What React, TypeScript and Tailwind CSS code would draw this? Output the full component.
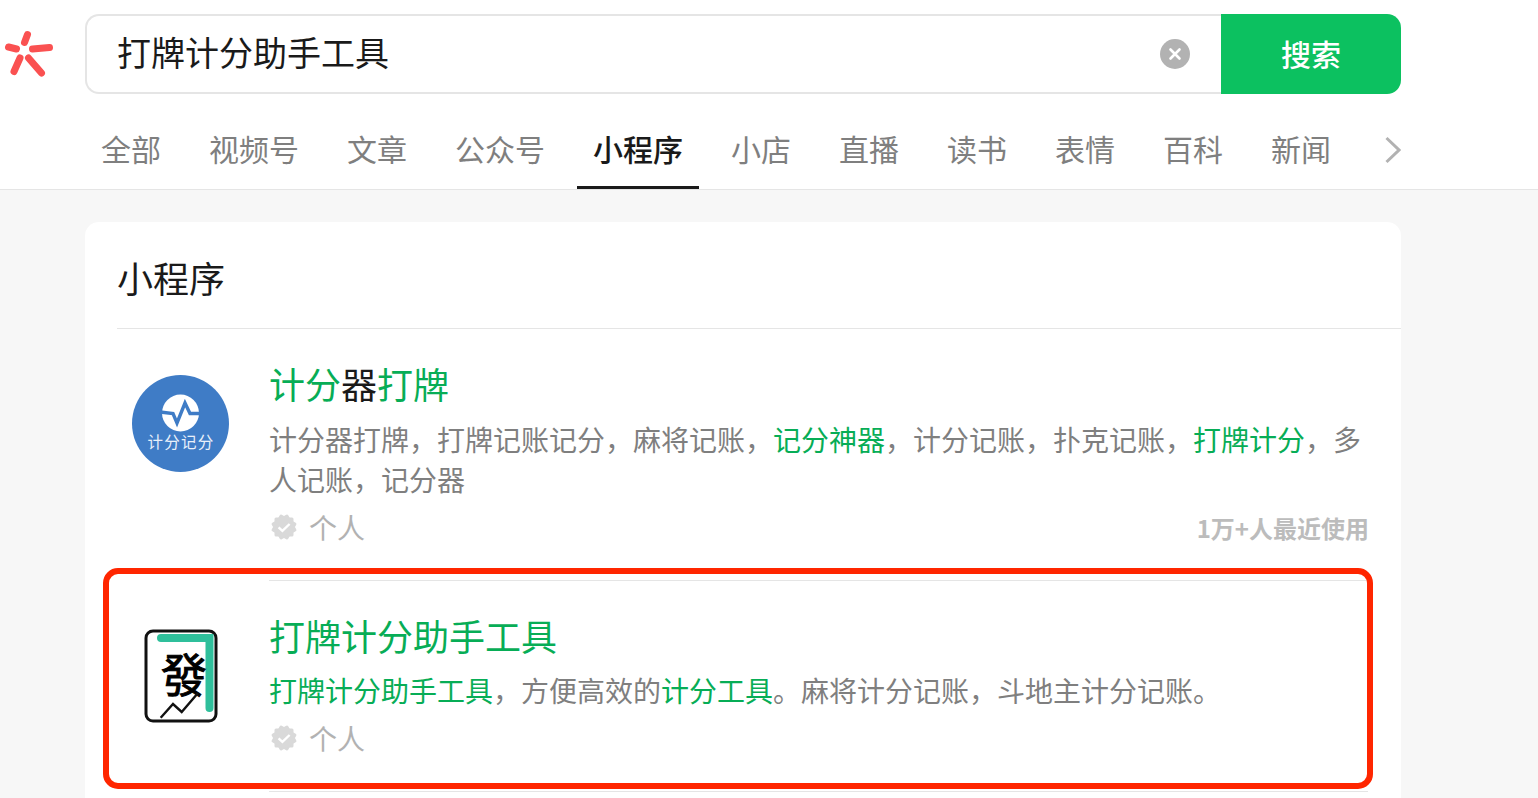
import React from "react";

const tabs = ["全部", "视频号", "文章", "公众号", "小程序", "小店", "直播", "读书", "表情", "百科", "新闻"];

function Logo() {
  return (
    <svg width="85" height="80" viewBox="0 14 85 80" className="shrink-0">
      <g stroke="#fa5151" strokeWidth="7" strokeLinecap="round" fill="none">
        <path d="M27.5 34.5 L24.5 42.5" />
        <path d="M32.5 49 L49.5 47.5" />
        <path d="M8.5 47 L16.5 49" />
        <path d="M20 58 L14 71.5" />
        <path d="M28.5 58 L41.5 73" />
      </g>
    </svg>
  );
}

function Badge() {
  return (
    <svg width="28" height="28" viewBox="0 0 28 28" className="shrink-0 ml-[1px]">
      <g fill="#d9d9d9">
        <rect x="4.5" y="4.5" width="19" height="19" rx="1.5" />
        <rect x="4.5" y="4.5" width="19" height="19" rx="1.5" transform="rotate(30 14 14)" />
        <rect x="4.5" y="4.5" width="19" height="19" rx="1.5" transform="rotate(60 14 14)" />
      </g>
      <path d="M8.6 14.4 L12.4 17.8 L19.6 11" stroke="#ffffff" strokeWidth="2.4" fill="none" />
    </svg>
  );
}

function Meta({ right }: { right?: string }) {
  return (
    <div className="flex items-center h-[40px]">
      <Badge />
      <span className="ml-[11px] text-[28px] leading-[40px] text-[#b2b2b2]">个人</span>
      {right && <span className="ml-auto mr-[-1px] mt-[2px] text-[24px] leading-[40px] text-[#bcbcbc] font-bold">{right}</span>}
    </div>
  );
}

const G = ({ children }: { children: React.ReactNode }) => <span className="text-[#07ad56]">{children}</span>;

function CircleIcon() {
  return (
    <svg width="97" height="97" viewBox="0 0 97 97">
      <circle cx="48.5" cy="48.5" r="48.5" fill="#3f7cc6" />
      <circle cx="48.5" cy="38" r="18.5" fill="#ffffff" />
      <path d="M28 37 L41 38.5 L45 48 L53 28 L58 38.5 H69" stroke="#3f7cc6" strokeWidth="3.4" fill="none" />
      <text x="49" y="73" textAnchor="middle" fontSize="15.5" letterSpacing="1.2" fill="#e8f0fa">计分记分</text>
    </svg>
  );
}

function TileIcon() {
  return (
    <svg width="74" height="94" viewBox="0 0 74 94">
      <rect x="2" y="2" width="70" height="90" rx="7" fill="#ffffff" stroke="#111111" strokeWidth="3" />
      <path d="M17 9 H65.5 V79" stroke="#2fbf9b" strokeWidth="8" strokeLinecap="round" fill="none" />
      <text
        x="40"
        y="63"
        textAnchor="middle"
        fontSize="46"
        fill="#000000"
        stroke="#000000"
        strokeWidth="1"
        style={{ fontFamily: '"Noto Sans CJK TC", sans-serif' }}
      >
        發
      </text>
      <path d="M16.7 88.7 L29 75 L37.7 83 L54 64" stroke="#111111" strokeWidth="2.4" fill="none" />
    </svg>
  );
}

export default function App() {
  return (
    <div
      className="relative w-[1538px] h-[798px] overflow-hidden bg-[#f7f7f7]"
      style={{ fontFamily: '"Noto Sans CJK SC", "Noto Sans", sans-serif' }}
    >
      <header className="h-[190px] bg-white border-b border-[#e5e5e5] pt-[14px]">
        <div className="flex w-[1401px] h-[80px]">
          <Logo />
          <div className="flex-1 flex items-center border-2 border-r-0 border-[#e5e5e5] rounded-l-[14px] pl-[30px] pr-[31px]">
            <span className="flex-1 mb-[4px] text-[34px] leading-[48px] text-[#1a1a1a]">打牌计分助手工具</span>
            <svg width="30" height="30" viewBox="0 0 30 30">
              <circle cx="15" cy="15" r="15" fill="#b2b2b2" />
              <path d="M10.5 10.5 L19.5 19.5 M19.5 10.5 L10.5 19.5" stroke="#fff" strokeWidth="2.6" strokeLinecap="round" />
            </svg>
          </div>
          <div className="w-[180px] flex items-center justify-center pb-[2px] bg-[#0cc160] rounded-r-[14px] text-white text-[30px] font-medium">
            搜索
          </div>
        </div>
        <nav className="flex items-center w-[1401px] h-[95px] pl-[101px]">
          <div className="flex gap-[48px] mt-[16px]">
            {tabs.map((t) => (
              <div key={t} className="relative h-[78px] leading-[74px] text-[30px]">
                <span className={t === "小程序" ? "text-[#1a1a1a] font-medium" : "text-[#7f7f7f]"}>{t}</span>
                {t === "小程序" && <div className="absolute left-[-16px] right-[-16px] bottom-0 h-[3px] bg-[#1a1a1a]" />}
              </div>
            ))}
          </div>
          <svg width="18" height="30" viewBox="0 0 18 30" className="ml-auto mt-[16px]">
            <path d="M3.5 3 L16 15 L3.5 27" stroke="#b2b2b2" strokeWidth="3" fill="none" />
          </svg>
        </nav>
      </header>

      <main className="ml-[85px] mt-[32px] w-[1316px] bg-white rounded-[14px] pl-[32px] pb-[40px]">
        <h2 className="h-[107px] leading-[110px] text-[36px] font-normal text-[#1a1a1a] border-b border-[#e5e5e5]">小程序</h2>

        <section className="flex h-[252px]">
          <div className="w-[152px] pl-[15px] pt-[46px] shrink-0">
            <CircleIcon />
          </div>
          <div className="flex-1 border-b border-[#e5e5e5] mr-[33px] pt-[26px]">
            <div className="text-[36px] leading-[56px] text-[#1a1a1a]">
              <G>计分</G>器<G>打牌</G>
            </div>
            <p className="text-[28px] leading-[40px] mt-[8px] text-[#7f7f7f]">
              计分器打牌，打牌记账记分，麻将记账，<G>记分神器</G>，计分记账，扑克记账，<G>打牌计分</G>，多人记账，记分器
            </p>
            <div className="mt-[8px]">
              <Meta right="1万+人最近使用" />
            </div>
          </div>
        </section>

        <section className="flex h-[211px]">
          <div className="w-[152px] pl-[27px] pt-[48px] shrink-0">
            <TileIcon />
          </div>
          <div className="flex-1 border-b border-[#e5e5e5] mr-[33px] pt-[26px]">
            <div className="text-[36px] leading-[56px] text-[#07ad56]">打牌计分助手工具</div>
            <p className="text-[28px] leading-[40px] mt-[7px] text-[#7f7f7f]">
              <G>打牌计分助手工具</G>，方便高效的<G>计分工具</G>。麻将计分记账，斗地主计分记账。
            </p>
            <div className="mt-[8px]">
              <Meta />
            </div>
          </div>
        </section>
      </main>

      <div className="absolute left-[103px] top-[568px] w-[1270px] h-[221px] border-[6px] border-[#ff2600] rounded-[15px]" />
    </div>
  );
}
